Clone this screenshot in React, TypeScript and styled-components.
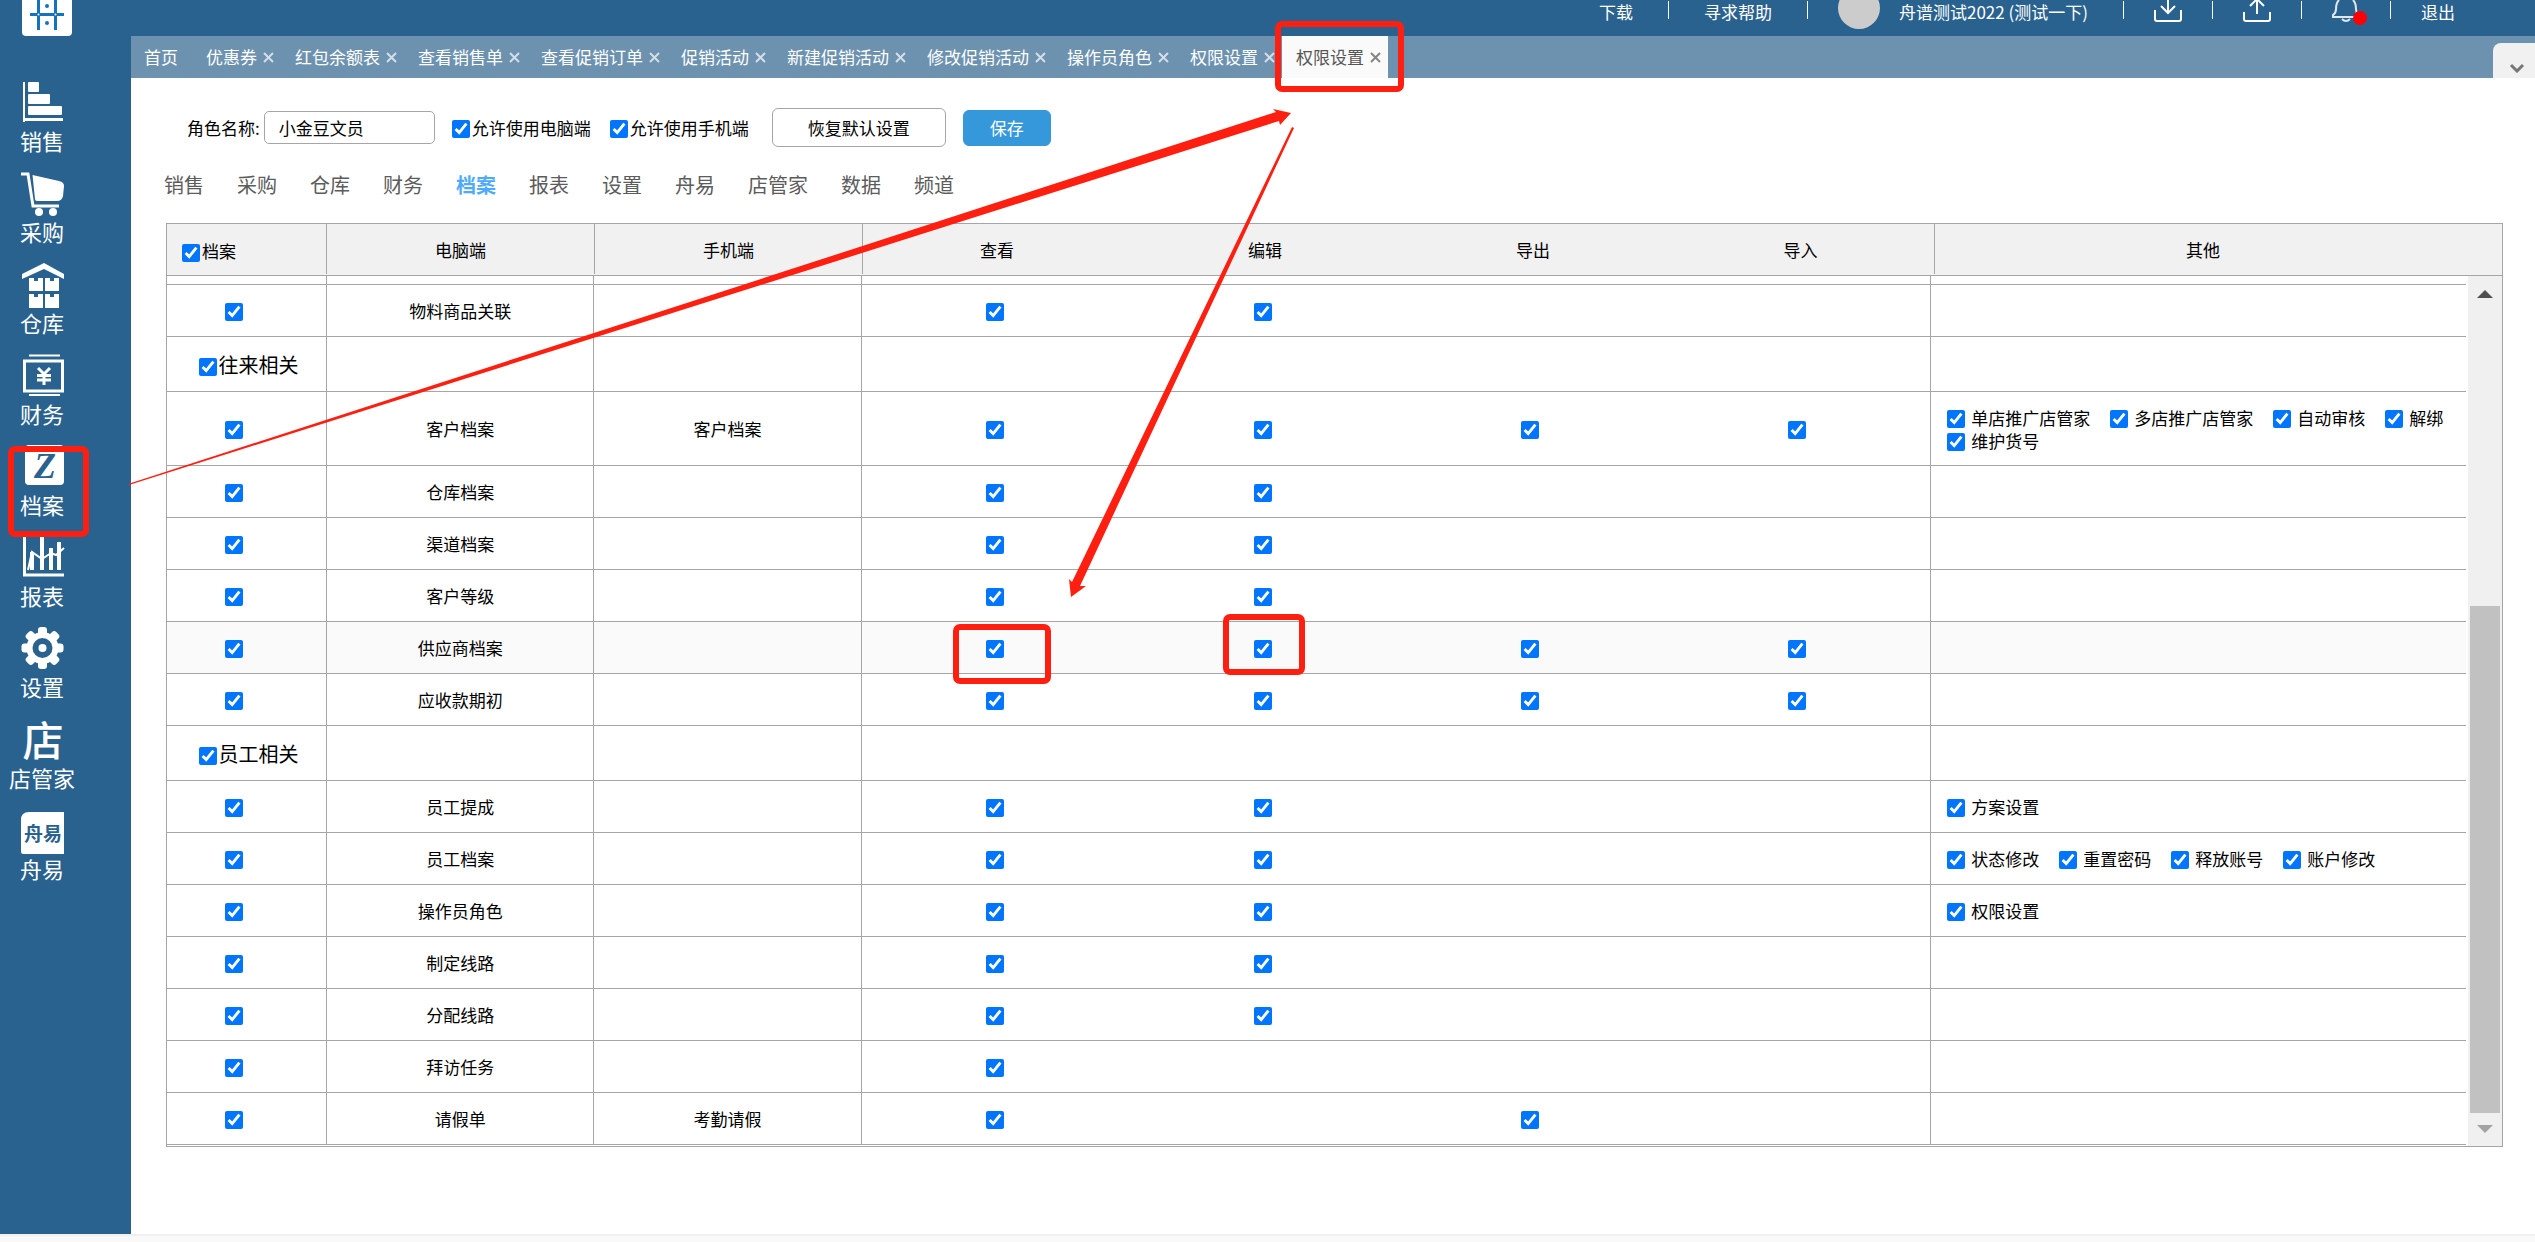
import React, { useState } from 'react';
import styled, { createGlobalStyle, css } from 'styled-components';

const BLUE = '#2a628f';
const LINE = '#a6a6a6';
const RED = '#ff1f10';

const GlobalStyle = createGlobalStyle`
  *, *::before, *::after { box-sizing: border-box; }
  body {
    margin: 0;
    background: #fff;
    color: #000;
    font-family: "Noto Sans CJK SC", "Liberation Sans", sans-serif;
    font-size: 17px;
    line-height: 24px;
  }
  button, input { font: inherit; color: inherit; }
  a { color: inherit; text-decoration: none; }
`;

const Page = styled.div`
  position: relative;
  display: flex;
  flex-direction: column;
  min-height: 100vh;
  overflow: hidden;
`;

const Shell = styled.div`
  display: flex;
  flex: 1;
`;

const Sidebar = styled.aside`
  flex: none;
  width: 131px;
  background: ${BLUE};
  color: #fff;
`;

const Logo = styled.a`
  display: block;
  width: 50px;
  height: 36px;
  margin: 0 0 45px 22px;
  svg { display: block; }
`;

const Nav = styled.nav`
  display: flex;
  flex-direction: column;
  gap: 17px;
  width: 84px;
`;

const NavLink = styled.a`
  display: flex;
  flex-direction: column;
  align-items: center;
  font-size: 22px;
  line-height: 30px;
  white-space: nowrap;
  svg { display: block; }
`;

const Main = styled.main`
  flex: 1;
  min-width: 0;
`;

const TopBar = styled.header`
  display: flex;
  justify-content: flex-end;
  align-items: flex-start;
  gap: 30px;
  height: 36px;
  padding-right: 80px;
  background: ${BLUE};
  color: #fff;
`;

const TopLink = styled.a<{ $wide?: boolean }>`
  display: flex;
  align-items: center;
  height: 24px;
  padding: 0 ${p => (p.$wide ? 5 : 0)}px;
  white-space: nowrap;
`;

const Divider = styled.span`
  width: 1px;
  height: 18px;
  margin-top: 1px;
  background: #fff;
`;

const User = styled.a`
  display: flex;
  gap: 19px;
  height: 29px;
  padding-right: 5px;
  white-space: nowrap;
`;

const Avatar = styled.span`
  width: 42px;
  height: 42px;
  margin-top: -13px;
  border-radius: 50%;
  background: #ccc;
`;

const IconButton = styled.button`
  position: relative;
  width: 28px;
  height: 24px;
  padding: 0;
  border: 0;
  background: none;
  svg { display: block; }
`;

const Dot = styled.span`
  position: absolute;
  top: 11px;
  right: -7px;
  width: 14px;
  height: 14px;
  border-radius: 50%;
  background: #f00;
`;

const TabBar = styled.div`
  display: flex;
  align-items: stretch;
  height: 42px;
  background: #6d92b0;
`;

const Tab = styled.div<{ $active?: boolean }>`
  display: flex;
  align-items: center;
  gap: 6px;
  padding: 0 7px 0 14px;
  color: #fff;
  white-space: nowrap;
  ${p => p.$active && css`
    background: #fafafa;
    color: #555;
  `}
`;

const HomeTab = styled(Tab)`
  padding: 0 14px 0 13px;
`;

const CloseButton = styled.button`
  width: 11px;
  height: 14px;
  padding: 0;
  border: 0;
  background: none;
  opacity: 0.7;
  svg { display: block; }
`;

const ExpandButton = styled.button`
  align-self: flex-end;
  width: 42px;
  height: 35px;
  margin-left: auto;
  padding: 10px 0 0 6px;
  border: 0;
  border-radius: 8px 0 0 0;
  background: #f1f1f1;
  color: #777;
`;

const RoleForm = styled.form`
  display: flex;
  align-items: center;
  gap: 17px;
  padding: 30px 32px 0 56px;
`;

const Field = styled.label`
  display: flex;
  align-items: center;
  gap: 4px;
  white-space: nowrap;
`;

const TextInput = styled.input`
  width: 171px;
  height: 33px;
  padding: 0 14px;
  border: 1px solid ${LINE};
  border-radius: 5px;
  background: #fff;
`;

const Checks = styled.div`
  display: flex;
  gap: 19px;
  padding-right: 6px;
`;

const CheckLabel = styled.label<{ $gap?: number; $size?: number }>`
  display: inline-flex;
  align-items: center;
  gap: ${p => p.$gap ?? 2}px;
  font-size: ${p => p.$size ?? 17}px;
  white-space: nowrap;
  vertical-align: middle;
`;

const Box = styled.input.attrs({ type: 'checkbox' })`
  display: block;
  flex: none;
  width: 18px;
  height: 18px;
  margin: 3px 0 0;
  accent-color: #0075ff;
`;

const Button = styled.button<{ $primary?: boolean }>`
  height: ${p => (p.$primary ? 36 : 39)}px;
  padding: 0 ${p => (p.$primary ? 26 : 35)}px;
  border: 1px solid ${p => (p.$primary ? '#3498db' : LINE)};
  border-radius: 6px;
  background: ${p => (p.$primary ? '#3498db' : '#fff')};
  color: ${p => (p.$primary ? '#fff' : '#000')};
`;

const SubTabs = styled.div`
  display: flex;
  gap: 33px;
  padding: 22px 32px 22px 33px;
`;

const SubTab = styled.button<{ $active?: boolean }>`
  padding: 0;
  border: 0;
  background: none;
  color: ${p => (p.$active ? '#4fa9ff' : '#5c5c5c')};
  font-size: 20px;
  line-height: 32px;
  font-weight: ${p => (p.$active ? 700 : 400)};
`;

const Panel = styled.section`
  margin: 0 32px 87px 35px;
  border: 1px solid ${LINE};
`;

const HeadWrap = styled.div`
  padding-right: 31px;
  border-bottom: 1px solid ${LINE};
  background: #f1f1f1;
`;

const BodyWrap = styled.div`
  display: flex;
  gap: 2px;
`;

const Grid = styled.table`
  flex: 1;
  width: 100%;
  table-layout: fixed;
  border-collapse: separate;
  border-spacing: 0;
  margin-bottom: 1px;
`;

const NameCol = styled.col`
  width: 160px;
`;

const HeadCell = styled.th<{ $line?: boolean; $first?: boolean }>`
  height: 50px;
  padding: 2px 0 0 ${p => (p.$first ? 15 : 0)}px;
  border-right: ${p => (p.$line ? `1px solid ${LINE}` : '0')};
  font-weight: 400;
  text-align: ${p => (p.$first ? 'left' : 'center')};
`;

const Row = styled.tr<{ $height: number; $hover?: boolean }>`
  height: ${p => p.$height}px;
  background: ${p => (p.$hover ? '#fafafa' : '#fff')};
`;

const Cell = styled.td<{ $line?: boolean; $pick?: boolean; $group?: boolean }>`
  padding: 0 ${p => (p.$pick ? 26 : 0)}px 0 ${p => (p.$group ? 4 : 0)}px;
  border-right: ${p => (p.$line ? `1px solid ${LINE}` : '0')};
  border-bottom: 1px solid ${LINE};
  text-align: center;
  vertical-align: middle;
  ${Box} { margin-left: auto; margin-right: auto; }
`;

const OtherCell = styled(Cell)`
  padding: 0 16px;
  text-align: left;
`;

const Options = styled.div`
  display: flex;
  flex-wrap: wrap;
  column-gap: 20px;
  ${CheckLabel} { line-height: 23px; }
`;

const ScrollTrack = styled.div`
  display: flex;
  flex-direction: column;
  align-items: center;
  flex: none;
  width: 34px;
  padding: 14px 0 13px;
  background: #f0f0f0;
`;

const ScrollArrow = styled.span<{ $down?: boolean }>`
  border: 8px solid transparent;
  ${p => p.$down
    ? css`border-top-color: #a3a3a3; border-bottom: 0;`
    : css`border-bottom-color: #505050; border-top: 0;`}
`;

const ScrollSpace = styled.div`
  display: flex;
  flex-direction: column;
  justify-content: flex-end;
  flex: 1;
  width: 30px;
  padding: 10px 0 12px;
`;

const ScrollThumb = styled.div`
  height: 63%;
  background: #c1c1c1;
`;

const Footer = styled.footer`
  height: 8px;
  border-top: 2px solid #f0f0f0;
  background: #f9f9f9;
`;

const Marks = styled.svg`
  position: absolute;
  top: 0;
  left: 0;
  pointer-events: none;
`;

const icons: Record<string, React.ReactNode> = {
  销售: (
    <g fill="#fff">
      <rect x="3" y="1" width="2" height="40" />
      <rect x="3" y="37" width="40" height="3" />
      <rect x="8" y="1" width="11" height="10" rx="1" />
      <rect x="8" y="13" width="22" height="10" rx="1" />
      <rect x="8" y="25" width="34" height="9" rx="1" />
    </g>
  ),
  采购: (
    <g>
      <path d="M12.500 3 L39 9 Q44 10 44 14 L43 24 Q42 29 37 29 L17 29 Q15 29 15 27 Z" fill="#fff" />
      <path d="M1 2 H8 L13 34 H39" fill="none" stroke="#fff" strokeWidth="3" />
      <circle cx="19" cy="40" r="4" fill="#fff" />
      <circle cx="33" cy="40" r="4" fill="#fff" />
    </g>
  ),
  仓库: (
    <g fill="#fff">
      <path d="M2 11 L24 0 L44 11 V16 L24 6 L2 16 Z" />
      <path d="M9 15 h5 v3 h4 v-3 h5 v13 h-14 Z M25 15 h5 v3 h4 v-3 h5 v13 h-14 Z" />
      <path d="M9 31 h5 v3 h4 v-3 h5 v14 h-14 Z M25 31 h5 v3 h4 v-3 h5 v14 h-14 Z" />
    </g>
  ),
  财务: (
    <g fill="none" stroke="#fff" strokeWidth="3">
      <path d="M9 1.500 H40 M9 41 H40" strokeWidth="2" />
      <rect x="4.500" y="7" width="38" height="30" strokeWidth="3" />
      <path d="M18 14 L24 20 L30 14 M17 21.500 H31 M17 26 H31 M24 20 V31" />
    </g>
  ),
  档案: (
    <g>
      <rect x="5" y="0" width="39" height="40" rx="4" fill="#fff" />
      <text x="25" y="33" textAnchor="middle" fontFamily="Liberation Serif, serif" fontWeight="700" fontStyle="italic" fontSize="36" fill={BLUE}>Z</text>
    </g>
  ),
  报表: (
    <g fill="none" stroke="#fff">
      <path d="M4.500 0 V39 H44" strokeWidth="3" />
      <path d="M12 16 V34 M22 0 V34 M31 12 V34 M39 6 V34" strokeWidth="4" />
      <path d="M8 34 L12 16 L22 23 L31 17 L36 19 L44 12" strokeWidth="2" />
    </g>
  ),
  设置: (
    <g>
      {[0, 45, 90, 135].map(a => (
        <rect key={a} x="18" y="0" width="9" height="42" rx="3" fill="#fff" transform={`rotate(${a} 22.5 21)`} />
      ))}
      <circle cx="22.500" cy="21" r="16" fill="#fff" />
      <circle cx="22.500" cy="21" r="10" fill={BLUE} />
      <circle cx="22.500" cy="21" r="4" fill="#fff" />
    </g>
  ),
  店管家: (
    <text x="23" y="38" textAnchor="middle" fontSize="41" fontWeight="500" fill="#fff">店</text>
  ),
  舟易: (
    <g>
      <path d="M9 3 H44 V45 H3 Q1 45 1 42 V11 Q1 3 9 3 Z" fill="#fff" />
      <text x="23" y="32" textAnchor="middle" fontSize="19" fontWeight="700" fill={BLUE}>舟易</text>
    </g>
  ),
};

const openTabs = [
  '优惠券', '红包余额表', '查看销售单', '查看促销订单', '促销活动',
  '新建促销活动', '修改促销活动', '操作员角色', '权限设置', '权限设置',
];

const sections = ['销售', '采购', '仓库', '财务', '档案', '报表', '设置', '舟易', '店管家', '数据', '频道'];

type Permission = {
  pc?: string;
  app?: string;
  group?: string;
  // one flag each for view, edit, export and import
  on?: string;
  other?: string[];
  height?: number;
  hover?: boolean;
};

const permissions: Permission[] = [
  { pc: '物料商品关联', on: '1100' },
  { group: '往来相关', height: 55 },
  { pc: '客户档案', app: '客户档案', on: '1111', height: 74, other: ['单店推广店管家', '多店推广店管家', '自动审核', '解绑', '维护货号'] },
  { pc: '仓库档案', on: '1100' },
  { pc: '渠道档案', on: '1100' },
  { pc: '客户等级', on: '1100' },
  { pc: '供应商档案', on: '1111', hover: true },
  { pc: '应收款期初', on: '1111' },
  { group: '员工相关', height: 55 },
  { pc: '员工提成', on: '1100', other: ['方案设置'] },
  { pc: '员工档案', on: '1100', other: ['状态修改', '重置密码', '释放账号', '账户修改'] },
  { pc: '操作员角色', on: '1100', other: ['权限设置'] },
  { pc: '制定线路', on: '1100' },
  { pc: '分配线路', on: '1100' },
  { pc: '拜访任务', on: '1000' },
  { pc: '请假单', app: '考勤请假', on: '1010' },
];

const actions = ['查看', '编辑', '导出', '导入'];

const Columns = () => (
  <colgroup>
    <NameCol />
    {Array.from({ length: 8 }, (_, i) => <col key={i} />)}
  </colgroup>
);

const PermissionRow = ({ item }: { item: Permission }) => (
  <Row $height={item.height ?? 52} $hover={item.hover}>
    <Cell $line $pick={!item.group} $group={!!item.group}>
      {item.group ? (
        <CheckLabel $size={20}><Box defaultChecked />{item.group}</CheckLabel>
      ) : (
        <Box defaultChecked aria-label={item.pc} />
      )}
    </Cell>
    <Cell $line>{item.pc}</Cell>
    <Cell $line>{item.app}</Cell>
    {actions.map((action, i) => (
      <Cell key={action} $line={i === 3}>
        {item.on?.[i] === '1' && <Box defaultChecked aria-label={`${item.pc} ${action}`} />}
      </Cell>
    ))}
    <OtherCell colSpan={2}>
      {item.other && (
        <Options>
          {item.other.map(name => (
            <CheckLabel key={name} $gap={6}><Box defaultChecked />{name}</CheckLabel>
          ))}
        </Options>
      )}
    </OtherCell>
  </Row>
);

const Annotations = () => (
  <Marks width="1420" height="700" aria-hidden="true">
    <g fill="none" stroke={RED} strokeWidth="6">
      <rect x="11" y="449" width="75" height="85" rx="4" />
      <rect x="1278" y="24" width="123" height="65" rx="4" />
      <rect x="956" y="627" width="92" height="54" rx="4" />
      <rect x="1226" y="617" width="76" height="55" rx="4" />
    </g>
    <g fill={RED}>
      <path d="M128 484 L1276 112 L1273 109 L1291 113 L1280 125 L1279 121 L129 485 Z" />
      <path d="M1292 127 L1294 128 L1080 586 L1086 586 L1071 597 L1069 579 L1072 582 Z" />
    </g>
  </Marks>
);

export default function App() {
  const [role, setRole] = useState('小金豆文员');
  const [section, setSection] = useState('档案');

  return (
    <Page>
      <GlobalStyle />
      <Shell>
        <Sidebar>
          <Logo href="#" aria-label="舟谱">
            <svg width="50" height="36">
              <path d="M0 0 H50 V32 Q50 36 46 36 H4 Q0 36 0 32 Z" fill="#fff" />
              <g stroke="#1373bb" strokeWidth="3" fill="none">
                <path d="M16.500 0 V30 M33.500 0 V30" />
                <path d="M8 14.500 H42" strokeWidth="3" />
              </g>
              <circle cx="25" cy="6" r="2" fill="#1373bb" />
              <circle cx="25" cy="23" r="2" fill="#1373bb" />
              <circle cx="16.500" cy="14.500" r="1" fill="#fff" />
              <circle cx="33.500" cy="14.500" r="1" fill="#fff" />
            </svg>
          </Logo>
          <Nav>
            {Object.keys(icons).map(name => (
              <NavLink key={name} href="#">
                <svg width="44" height="44" overflow="visible" aria-hidden="true">{icons[name]}</svg>
                {name}
              </NavLink>
            ))}
          </Nav>
        </Sidebar>

        <Main>
          <TopBar>
            <TopLink href="#" $wide>下载</TopLink>
            <Divider />
            <TopLink href="#" $wide>寻求帮助</TopLink>
            <Divider />
            <User href="#"><Avatar />舟谱测试2022 (测试一下)</User>
            <Divider />
            <IconButton aria-label="导入">
              <svg width="28" height="24" fill="none" stroke="#fff" strokeWidth="2">
                <path d="M1 10 V19 Q1 21 3 21 H25 Q27 21 27 19 V10" />
                <path d="M14 0 V13 M7 6 L14 13 L21 6" />
              </svg>
            </IconButton>
            <Divider />
            <IconButton aria-label="导出">
              <svg width="28" height="24" fill="none" stroke="#fff" strokeWidth="2">
                <path d="M1 12 V19 Q1 21 3 21 H25 Q27 21 27 19 V12" />
                <path d="M14 14 V0 M7 6 L14 -1 L21 6" />
              </svg>
            </IconButton>
            <Divider />
            <IconButton aria-label="消息">
              <svg width="28" height="24" fill="none" stroke="#dfe8ef" strokeWidth="2">
                <path d="M7 0 Q4 3 4 9 Q4 13 1 15 V17 H26 V15 Q24 13 24 9 Q24 3 21 0" />
                <path d="M10 19 Q14 23 18 19" />
              </svg>
              <Dot />
            </IconButton>
            <Divider />
            <TopLink href="#">退出</TopLink>
          </TopBar>

          <TabBar>
            <HomeTab>首页</HomeTab>
            {openTabs.map((name, i) => {
              const active = i === openTabs.length - 1;
              return (
                <Tab key={i} $active={active}>
                  {name}
                  <CloseButton aria-label={`关闭 ${name}`}>
                    <svg width="11" height="11" fill="none" stroke={active ? '#555' : '#fff'} strokeWidth="2">
                      <path d="M1 1 L10 10 M10 1 L1 10" />
                    </svg>
                  </CloseButton>
                </Tab>
              );
            })}
            <ExpandButton aria-label="展开">
              <svg width="16" height="10" fill="none" stroke="currentColor" strokeWidth="3">
                <path d="M2 2 L8 8 L14 2" />
              </svg>
            </ExpandButton>
          </TabBar>

          <RoleForm onSubmit={e => e.preventDefault()}>
            <Field>
              角色名称:
              <TextInput value={role} onChange={e => setRole(e.target.value)} />
            </Field>
            <Checks>
              <CheckLabel><Box defaultChecked />允许使用电脑端</CheckLabel>
              <CheckLabel><Box defaultChecked />允许使用手机端</CheckLabel>
            </Checks>
            <Button type="button">恢复默认设置</Button>
            <Button type="submit" $primary>保存</Button>
          </RoleForm>

          <SubTabs>
            {sections.map(name => (
              <SubTab key={name} $active={name === section} onClick={() => setSection(name)}>{name}</SubTab>
            ))}
          </SubTabs>

          <Panel>
            <HeadWrap>
              <Grid>
                <Columns />
                <thead>
                  <tr>
                    <HeadCell $line $first>
                      <CheckLabel><Box defaultChecked />档案</CheckLabel>
                    </HeadCell>
                    <HeadCell $line>电脑端</HeadCell>
                    <HeadCell $line>手机端</HeadCell>
                    {actions.map((name, i) => <HeadCell key={name} $line={i === 3}>{name}</HeadCell>)}
                    <HeadCell colSpan={2}>其他</HeadCell>
                  </tr>
                </thead>
              </Grid>
            </HeadWrap>
            <BodyWrap>
              <Grid>
                <Columns />
                <tbody>
                  <Row $height={9}>
                    <Cell $line /><Cell $line /><Cell $line />
                    <Cell /><Cell /><Cell /><Cell $line />
                    <OtherCell colSpan={2} />
                  </Row>
                  {permissions.map((item, i) => <PermissionRow key={i} item={item} />)}
                </tbody>
              </Grid>
              <ScrollTrack>
                <ScrollArrow />
                <ScrollSpace><ScrollThumb /></ScrollSpace>
                <ScrollArrow $down />
              </ScrollTrack>
            </BodyWrap>
          </Panel>
        </Main>
      </Shell>
      <Footer />
      <Annotations />
    </Page>
  );
}
